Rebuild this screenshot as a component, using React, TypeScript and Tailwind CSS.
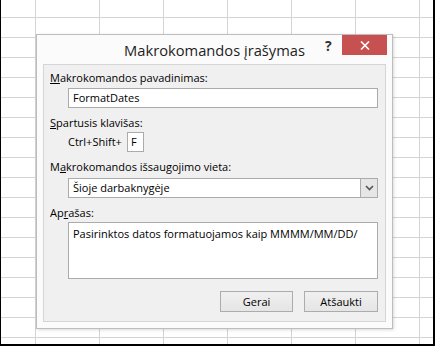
import React from "react";

const font = { fontFamily: '"Open Sans", "Noto Sans", sans-serif' };

const App = () => {
  return (
    <div
      className="relative w-[435px] h-[346px] overflow-hidden bg-white border-l border-r-2 border-b-2 border-black bg-[linear-gradient(to_right,#d4d4d4_1px,transparent_1px),linear-gradient(to_bottom,#d4d4d4_1px,transparent_1px)] bg-size-[64px_20px] bg-position-[34px_17px]"
      style={font}
    >
      <div className="absolute left-[35px] top-[34px] w-[357px] h-[295px] bg-[#fbfbfb] border border-[#bdbdbd] shadow-[1px_1px_3px_rgba(0,0,0,0.15)] flex flex-col">
        {/* title bar */}
        <div className="relative h-[29px] shrink-0">
          <div className="text-center text-[14.7px] text-[#1e1e1e] leading-[29px] pt-px">
            Makrokomandos įrašymas
          </div>
          <div className="absolute left-[288px] top-[3px] text-[14px] font-bold text-[#333] leading-[16px]">
            ?
          </div>
          <div className="absolute right-[5px] top-0 w-[45px] h-[20px] bg-[#c75050] flex items-center justify-center">
            <svg width="10" height="9" viewBox="0 0 10 9">
              <path d="M1 0.5 L9 8.5 M9 0.5 L1 8.5" stroke="white" strokeWidth="1.6" />
            </svg>
          </div>
        </div>

        {/* body panel */}
        <div className="mx-[6px] bg-[#f0f0f0] border border-[#d5d5d5] pl-[6px] pr-[7px] pt-[5px] pb-[9px] text-[11px] text-black">
          <div className="h-[16px] leading-[16px]">
            <u>M</u>akrokomandos pavadinimas:
          </div>
          <div className="ml-[18px] mt-[2px] h-[20px] bg-white border border-[#ababab] px-[4px] leading-[18px]">
            FormatDates
          </div>

          <div className="mt-[7px] h-[16px] leading-[16px]">
            <u>S</u>partusis klavišas:
          </div>
          <div className="ml-[18px] mt-px flex items-center h-[20px]">
            <span className="leading-[18px]">Ctrl+Shift+</span>
            <div className="ml-[5px] w-[17px] h-[20px] bg-white border border-[#ababab] px-[3px] leading-[18px]">
              F
            </div>
          </div>

          <div className="mt-[7px] h-[16px] leading-[16px]">
            M<u>a</u>krokomandos išsaugojimo vieta:
          </div>
          <div className="ml-[18px] mt-[3px] h-[20px] bg-white border border-[#ababab] flex">
            <div className="flex-1 px-[4px] leading-[18px]">Šioje darbaknygėje</div>
            <div className="w-[17px] h-[18px] bg-[#e6e6e6] border-l border-[#ababab] flex items-center justify-center">
              <svg width="9" height="6" viewBox="0 0 9 6">
                <path d="M1 1 L4.5 4.5 L8 1" stroke="#555" strokeWidth="1.6" fill="none" />
              </svg>
            </div>
          </div>

          <div className="mt-[7px] h-[16px] leading-[16px]">
            Ap<u>r</u>ašas:
          </div>
          <div className="ml-[18px] mt-px h-[57px] bg-white border border-[#ababab] px-[4px] pt-[3px] leading-[16px]">
            Pasirinktos datos formatuojamos kaip MMMM/MM/DD/
          </div>

          <div className="mt-[12px] flex justify-end gap-[11px]">
            <button className="w-[73px] h-[21px] border border-[#acacac] bg-[linear-gradient(#f0f0f0,#e5e5e5)] leading-[19px]">
              Gerai
            </button>
            <button className="w-[74px] h-[21px] border border-[#acacac] bg-[linear-gradient(#f0f0f0,#e5e5e5)] leading-[19px]">
              Atšaukti
            </button>
          </div>
        </div>
      </div>
    </div>
  );
};

export default App;
